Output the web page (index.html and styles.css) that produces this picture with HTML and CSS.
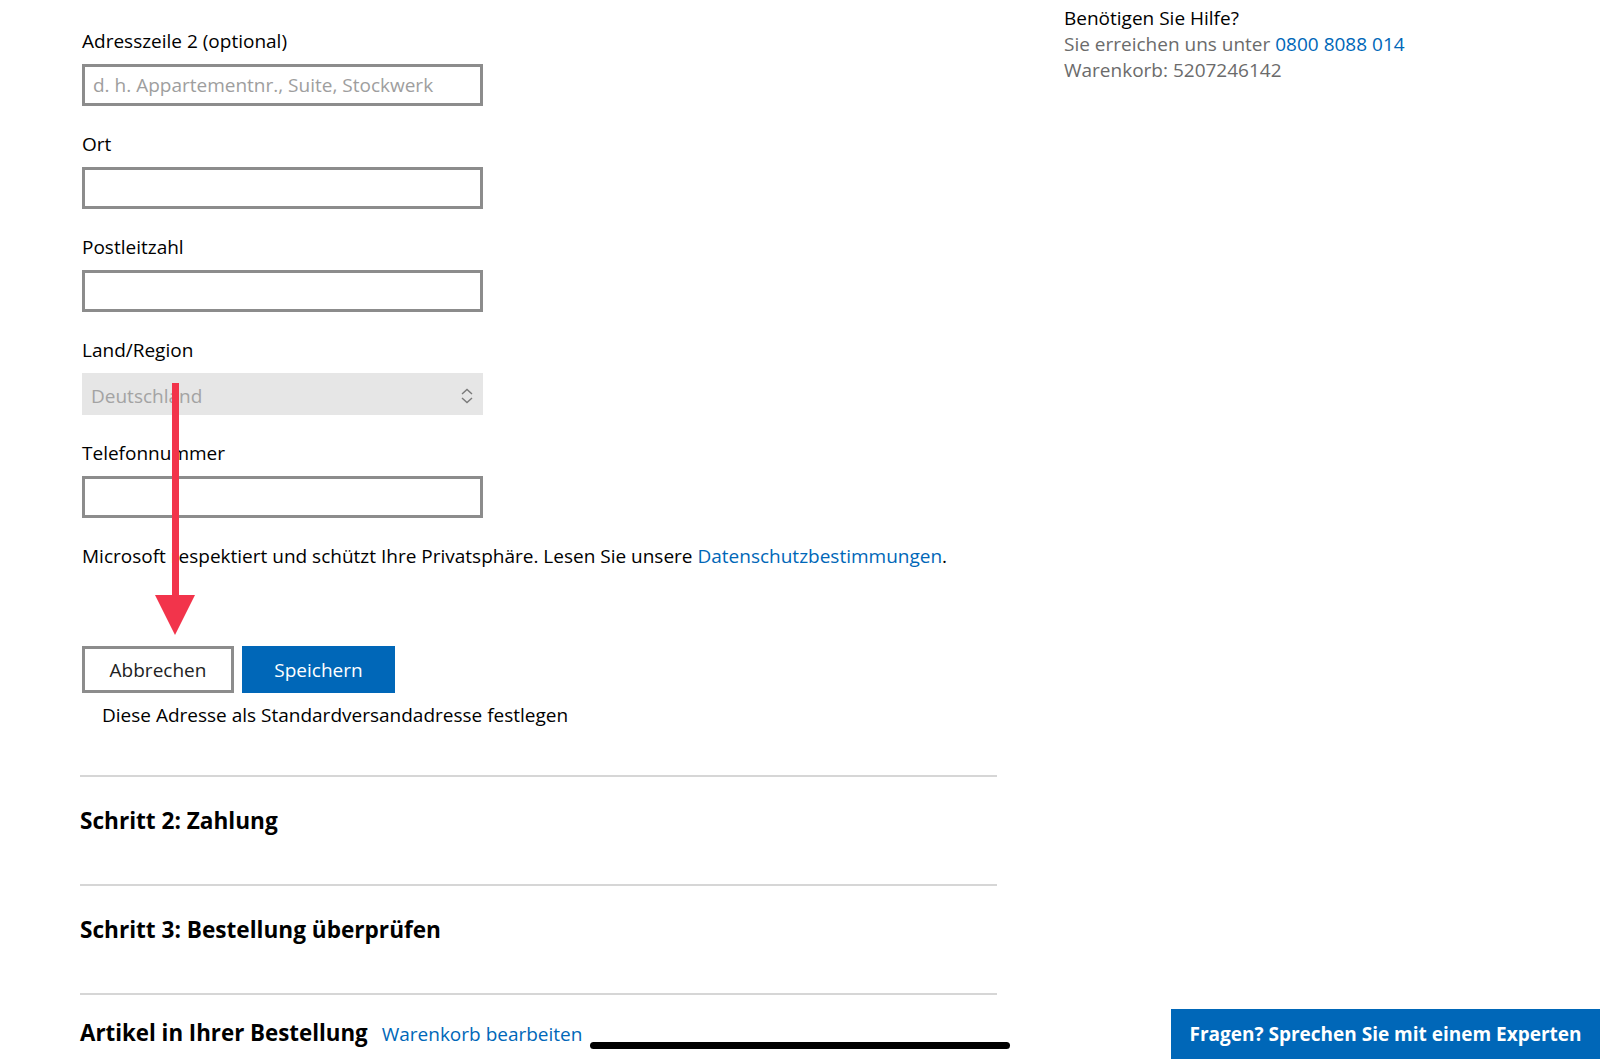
FILE: index.html
```html
<!DOCTYPE html>
<html lang="de">
<head>
    <meta charset="UTF-8">
    <title>Kasse - Lieferadresse</title>
    <link rel="stylesheet" href="styles.css">
</head>
<body>
    <div class="page">
        <main class="checkout">
            <form class="address-form">
                <div class="field">
                    <label for="line2">Adresszeile 2 (optional)</label>
                    <input id="line2" type="text" placeholder="d. h. Appartementnr., Suite, Stockwerk">
                </div>
                <div class="field">
                    <label for="city">Ort</label>
                    <input id="city" type="text">
                </div>
                <div class="field">
                    <label for="zip">Postleitzahl</label>
                    <input id="zip" type="text">
                </div>
                <div class="field">
                    <label for="country">Land/Region</label>
                    <div class="select">
                        <span>Deutschland</span>
                        <svg width="14" height="16" viewBox="0 0 14 16"><path d="M2 6 L7 1.5 L12 6 M2 10 L7 14.5 L12 10" fill="none" stroke="#7a7a7a" stroke-width="1.4"/></svg>
                    </div>
                </div>
                <div class="field">
                    <label for="phone">Telefonnummer</label>
                    <input id="phone" type="text">
                </div>
                <p class="privacy">Microsoft respektiert und schützt Ihre Privatsphäre. Lesen Sie unsere <a href="#">Datenschutzbestimmungen</a>.</p>
                <div class="actions">
                    <button type="button" class="btn btn-secondary">Abbrechen</button>
                    <button type="button" class="btn btn-primary">Speichern</button>
                </div>
                <p class="default-check">Diese Adresse als Standardversandadresse festlegen</p>
            </form>

            <section class="step"><h2>Schritt 2: Zahlung</h2></section>
            <section class="step"><h2>Schritt 3: Bestellung überprüfen</h2></section>
            <section class="step step-items">
                <h2>Artikel in Ihrer Bestellung</h2>
                <a href="#">Warenkorb bearbeiten</a>
            </section>
        </main>

        <aside class="help">
            <p class="help-title">Benötigen Sie Hilfe?</p>
            <p>Sie erreichen uns unter <a href="#">0800 8088 014</a></p>
            <p>Warenkorb: 5207246142</p>
        </aside>
    </div>

    <button class="expert">Fragen? Sprechen Sie mit einem Experten</button>

    <!-- annotation overlay -->
    <div class="arrow">
        <div class="arrow-shaft"></div>
        <div class="arrow-head"></div>
    </div>
    <div class="home-bar"></div>
</body>
</html>
```

FILE: styles.css
```css
body { margin: 0; font-family: "Open Sans", "Noto Sans", sans-serif; font-size: 19px; color: #000; background: #fff; overflow: hidden; height: 1059px; position: relative; }
a { color: #0067b8; text-decoration: none; }
p { margin: 0; }

.page { display: flex; padding-left: 80px; }
.checkout { width: 917px; }
.help { margin-left: 67px; padding-top: 5px; line-height: 26px; color: #6b6b6b; }
.help-title { color: #000; }

.address-form { padding-left: 2px; padding-top: 27px; }
.field { margin-bottom: 24px; }
.field label { display: block; line-height: 28px; margin-bottom: 9px; }
.field input { display: block; box-sizing: border-box; width: 401px; height: 42px; border: 3px solid #8c8c8c; padding: 0 8px; font-family: inherit; font-size: 19px; outline: none; }
.field input::placeholder { color: #9e9e9e; }
.select { box-sizing: border-box; width: 401px; height: 42px; margin-top: 1px; background: #e6e6e6; display: flex; align-items: center; justify-content: space-between; padding: 3px 9px 0 9px; color: #a3a3a3; }

.privacy { margin-top: 12px; line-height: 28px; }
.actions { display: flex; gap: 8px; margin-top: 76px; }
.btn { box-sizing: border-box; height: 47px; width: 152px; font-family: inherit; font-size: 19px; cursor: pointer; }
.btn-secondary { background: #fff; border: 3px solid #8c8c8c; color: #222; }
.btn-primary { background: #0067b8; border: none; color: #fff; width: 153px; }
.default-check { padding-left: 20px; margin-top: 8px; line-height: 28px; }

.step { border-top: 2px solid #d6d6d6; height: 107px; }
.step:first-of-type { margin-top: 46px; }
.step h2 { margin: 0; font-size: 22.6px; font-weight: 700; padding-top: 29px; line-height: 30px; }
.step-items { display: flex; align-items: baseline; gap: 14px; height: auto; }
.step-items h2 { padding-top: 23px; font-size: 22.3px; }
.step-items a { font-size: 19px; }

.expert { position: absolute; right: 0; bottom: 0; width: 429px; height: 50px; background: #0067b8; color: #fff; border: none; font-family: inherit; font-size: 19px; font-weight: 700; }

.arrow { position: absolute; left: 155px; top: 383px; width: 40px; }
.arrow-shaft { width: 7px; height: 216px; background: #f2344b; margin: 0 auto; }
.arrow-head { width: 0; height: 0; border-left: 20px solid transparent; border-right: 20px solid transparent; border-top: 40px solid #f2344b; margin-top: -4px; }
.home-bar { position: absolute; left: 590px; top: 1042px; width: 420px; height: 7px; border-radius: 4px; background: #000; }
```
